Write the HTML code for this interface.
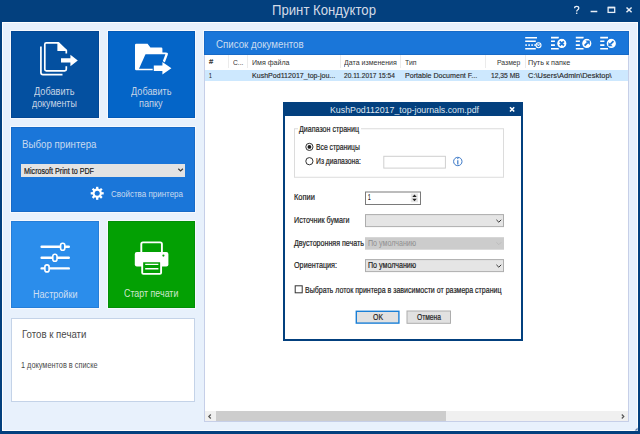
<!DOCTYPE html>
<html><head><meta charset="utf-8">
<style>
*{margin:0;padding:0;box-sizing:border-box}
html,body{width:640px;height:434px;overflow:hidden;background:#03407e}
body{position:relative;font-family:"Liberation Sans",sans-serif}
.a{position:absolute}
.t{position:absolute;white-space:nowrap;line-height:1;transform-origin:0 0}
svg{position:absolute;left:0;top:0;overflow:visible}
</style></head><body>
<!-- window frame -->
<div class="a" style="left:0;top:0;width:640px;height:22px;background:#03407e"></div>
<div class="a" style="left:2px;top:22px;width:636px;height:409px;background:#e8f1fc;border:1px solid #fff"></div>

<!-- tiles -->
<div class="a" style="left:11px;top:31px;width:88px;height:87px;background:#0450a0;box-shadow:0 0 0 1px rgba(255,255,255,.6),inset 0 0 0 1px rgba(0,0,50,.1)"></div>
<div class="a" style="left:108px;top:31px;width:87px;height:87px;background:#0465c8;box-shadow:0 0 0 1px rgba(255,255,255,.6),inset 0 0 0 1px rgba(0,0,50,.1)"></div>
<div class="a" style="left:11px;top:127px;width:184px;height:85px;background:#1a76d9;box-shadow:0 0 0 1px rgba(255,255,255,.6),inset 0 0 0 1px rgba(0,0,50,.1)"></div>
<div class="a" style="left:11px;top:221px;width:88px;height:87px;background:#2b8deb;box-shadow:0 0 0 1px rgba(255,255,255,.6),inset 0 0 0 1px rgba(0,0,50,.1)"></div>
<div class="a" style="left:108px;top:221px;width:87px;height:87px;background:#03a003;box-shadow:0 0 0 1px rgba(255,255,255,.6),inset 0 0 0 1px rgba(0,0,50,.1)"></div>
<div class="a" style="left:11px;top:318px;width:184px;height:84px;background:#fff;border:1px solid #c4d3e8"></div>
<!-- printer combo -->
<div class="a" style="left:21px;top:164px;width:164px;height:13px;background:#e3e3e3"></div>

<!-- right panel -->
<div class="a" style="left:204px;top:31px;width:425px;height:24px;background:#1a76d9;box-shadow:0 0 0 1px rgba(255,255,255,.6),inset 0 0 0 1px rgba(0,0,50,.1)"></div>
<div class="a" style="left:204px;top:55px;width:425px;height:367px;background:#fff;border:1px solid #c6cfe8;border-top:none"></div>
<div class="a" style="left:205px;top:70px;width:423px;height:11px;background:#cde8fe"></div>
<!-- header separators -->
<div class="a" style="left:228px;top:55px;width:1px;height:13px;background:#ebebeb"></div>
<div class="a" style="left:246.5px;top:55px;width:1px;height:13px;background:#ebebeb"></div>
<div class="a" style="left:340px;top:55px;width:1px;height:13px;background:#ebebeb"></div>
<div class="a" style="left:400px;top:55px;width:1px;height:13px;background:#ebebeb"></div>
<div class="a" style="left:485px;top:55px;width:1px;height:13px;background:#ebebeb"></div>
<div class="a" style="left:524.5px;top:55px;width:1px;height:13px;background:#ebebeb"></div>
<!-- scrollbar -->
<div class="a" style="left:205px;top:411px;width:423px;height:10px;background:#f0f0f0"></div>
<div class="a" style="left:216px;top:411px;width:230px;height:10px;background:#cdcdcd"></div>

<svg width="640" height="434" viewBox="0 0 640 434">
 <!-- window controls -->
 <g stroke="#e8eef6" fill="none">
  <path d="M574.6 8.2Q574.6 6.3 576.7 6.3Q578.8 6.3 578.8 8.1Q578.8 9.3 577.5 10Q576.7 10.5 576.7 11.6" stroke-width="1.3"/>
  <path d="M590.6 11.5H597.3" stroke-width="1.5"/>
  <rect x="608.1" y="7.4" width="6.6" height="5" stroke-width="1.3"/>
  <path d="M608.1 7.6H614.7" stroke-width="1.6"/>
  <path d="M626.5 7.5L631.6 12.2M631.6 7.5L626.5 12.2" stroke-width="1.5"/>
 </g>
 <circle cx="576.7" cy="13.3" r="0.8" fill="#e8eef6"/>

 <!-- documents icon -->
 <g fill="none" stroke="#fff" stroke-width="1.7">
  <path d="M66.3 53.5V50.3L58 42.8H46.3Q44.8 42.8 44.8 44.3V69.3Q44.8 70.8 46.3 70.8H64.8Q66.3 70.8 66.3 69.3V66.2"/>
  <path d="M40.9 46.5V72.5Q40.9 74.7 43 74.7H62.5"/>
 </g>
 <path d="M57.4 42.2H59L67 50.4V51H57.4Z" fill="#fff"/>
 <path d="M61 58.3H70.4V54.8L77.8 60.5L70.4 66.3V62.6H61Z" fill="#fff"/>

 <!-- folder icon -->
 <path d="M136.2 43.7H147.6L150.4 47.6H161.3Q162.4 47.6 162.4 48.7V52.6H165.9Q168.6 52.6 167.7 55L161.8 70.3H136.2Q135 70.3 135 69.1V44.9Q135 43.7 136.2 43.7Z" fill="#fff"/>
 <path d="M145.5 54.2H165.4L159.9 68.7H139Z" fill="#0465c8"/>
 <path d="M153.8 65.4H162.4V62L171.4 68.2L162.4 74.4V71H153.8Z" fill="#fff" stroke="#0465c8" stroke-width="2.2" paint-order="stroke"/>

 <!-- sliders icon -->
 <g stroke="#fff" stroke-width="2.4" stroke-linecap="round">
  <path d="M41.6 246.8H68.8M41.6 257.8H68.8M41.6 268.4H68.8"/>
 </g>
 <g stroke="#fff" stroke-width="1.6" fill="#2b8deb">
  <rect x="60.6" y="243.3" width="4.2" height="7" rx="2"/>
  <rect x="52.8" y="254.3" width="4.2" height="7" rx="2"/>
  <rect x="44.9" y="264.9" width="4.2" height="7" rx="2"/>
 </g>

 <!-- printer icon -->
 <rect x="141.3" y="242.4" width="20.6" height="12" rx="1.6" fill="none" stroke="#fff" stroke-width="1.9"/>
 <rect x="134.8" y="252.1" width="33.6" height="14.4" rx="2" fill="#fff"/>
 <circle cx="163.4" cy="255.6" r="1.1" fill="#03a003"/>
 <rect x="142.2" y="261.3" width="18.9" height="12.6" rx="1.2" fill="#03a003" stroke="#fff" stroke-width="1.9"/>
 <path d="M145.2 264.4H158.4M145.2 268.8H158.4" stroke="#fff" stroke-width="1.4"/>

 <!-- gear icon -->
 <g transform="translate(97.2 193.3)" fill="#fff">
  <circle r="4.7"/>
  <rect x="-1.15" y="-6.5" width="2.3" height="13"/>
  <rect x="-1.15" y="-6.5" width="2.3" height="13" transform="rotate(45)"/>
  <rect x="-1.15" y="-6.5" width="2.3" height="13" transform="rotate(90)"/>
  <rect x="-1.15" y="-6.5" width="2.3" height="13" transform="rotate(135)"/>
  <circle r="2.5" fill="#1a76d9"/>
 </g>

 <!-- printer combo chevron -->
 <path d="M178.3 168.8L180.6 171L182.9 168.8" stroke="#3a3a3a" stroke-width="1.2" fill="none"/>

 <!-- header icons -->
 <g stroke="#fff" stroke-width="1.6" fill="none">
  <path d="M525.2 37.8H537M525.2 41.3H535.8M525.2 48.7H535.8"/>
  <path d="M551 37.6H558.8M551 41.3H554.9M551 45.1H554.9M551 48.8H558.8"/>
  <path d="M575.8 37.6H583.6M575.8 41.3H579.9M575.8 45.1H579.9M575.8 48.8H583.6"/>
  <path d="M600.2 37.6H608M600.2 41.3H604.4M600.2 45.1H604.4M600.2 48.8H608"/>
 </g>
 <g fill="#fff"><rect x="525.3" y="44.3" width="1.6" height="1.6"/><rect x="528.3" y="44.3" width="1.6" height="1.6"/><rect x="531.3" y="44.3" width="1.6" height="1.6"/><rect x="534.3" y="44.3" width="1.6" height="1.6"/></g>
 <circle cx="538.5" cy="45.2" r="2.5" stroke="#fff" stroke-width="1.1" fill="#1a76d9"/>
 <path d="M537.3 44L539.7 46.4M539.7 44L537.3 46.4" stroke="#fff" stroke-width="0.9"/>
 <g fill="#fff" stroke="#1a76d9" stroke-width="1.2">
  <circle cx="561.8" cy="43.4" r="5.2"/>
  <circle cx="586.8" cy="43.4" r="5.2"/>
  <circle cx="611.3" cy="43.4" r="5.2"/>
 </g>
 <g stroke="#1a76d9" stroke-width="1.8" fill="none">
  <path d="M559.7 41.3L563.9 45.5M563.9 41.3L559.7 45.5"/>
  <path d="M584.6 45.7L587.6 42.7"/>
  <path d="M613.5 41.2L610.5 44.2"/>
 </g>
 <path d="M585.4 40.5H589.8V44.9Z" fill="#1a76d9"/>
 <path d="M608.3 41.9V46.3H612.7Z" fill="#1a76d9"/>

 <!-- scrollbar arrows -->
 <path d="M210.8 414.5L208.8 416.5L210.8 418.5" stroke="#555" stroke-width="1.2" fill="none"/>
 <path d="M621.8 414.5L623.8 416.5L621.8 418.5" stroke="#555" stroke-width="1.2" fill="none"/>
 <!-- grip -->
 <path d="M634.6 430.6L637.6 427.4V430.6Z" fill="#5f80ae"/>
</svg>

<div class="t" style="left:272.00px;top:2.00px;font-size:15px;color:#d3dbe7;transform:scaleX(0.877);">Принт Кондуктор</div>
<div class="t" style="left:34.30px;top:87.00px;font-size:10px;color:#c6d4e6;transform:scaleX(0.916);">Добавить</div>
<div class="t" style="left:32.20px;top:99.00px;font-size:10px;color:#c6d4e6;transform:scaleX(0.887);">документы</div>
<div class="t" style="left:130.90px;top:87.00px;font-size:10px;color:#c6d4e6;transform:scaleX(0.916);">Добавить</div>
<div class="t" style="left:138.90px;top:99.00px;font-size:10px;color:#c6d4e6;transform:scaleX(0.915);">папку</div>
<div class="t" style="left:32.50px;top:290.00px;font-size:10px;color:#cfdff2;transform:scaleX(0.907);">Настройки</div>
<div class="t" style="left:123.80px;top:289.00px;font-size:10px;color:#cde6cd;transform:scaleX(0.887);">Старт печати</div>
<div class="t" style="left:21.60px;top:140.00px;font-size:10px;color:#c8daef;transform:scaleX(0.970);">Выбор принтера</div>
<div class="t" style="left:24.20px;top:167.00px;font-size:8.5px;color:#1c1c1c;transform:scaleX(0.842);-webkit-text-stroke:0.2px #1c1c1c;">Microsoft Print to PDF</div>
<div class="t" style="left:111.20px;top:190.00px;font-size:9px;color:#c8daef;transform:scaleX(0.890);">Свойства принтера</div>
<div class="t" style="left:21.60px;top:330.00px;font-size:10px;color:#4a4a4a;transform:scaleX(0.965);">Готов к печати</div>
<div class="t" style="left:21.20px;top:361.00px;font-size:9px;color:#4a4a4a;transform:scaleX(0.815);">1 документов в списке</div>
<div class="t" style="left:215.70px;top:40.00px;font-size:10px;color:#cadcf0;transform:scaleX(0.973);">Список документов</div>
<div class="t" style="left:208.50px;top:58.00px;font-size:7px;color:#2a2a2a;transform:scaleX(1.075);-webkit-text-stroke:0.15px #2a2a2a;">#</div>
<div class="t" style="left:233.00px;top:59.00px;font-size:8px;color:#333;transform:scaleX(0.835);">С...</div>
<div class="t" style="left:251.60px;top:59.00px;font-size:8px;color:#333;transform:scaleX(0.884);">Имя файла</div>
<div class="t" style="left:344.00px;top:59.00px;font-size:8px;color:#333;transform:scaleX(0.878);">Дата изменения</div>
<div class="t" style="left:405.30px;top:59.00px;font-size:8px;color:#333;transform:scaleX(0.869);">Тип</div>
<div class="t" style="left:496.90px;top:59.00px;font-size:8px;color:#333;transform:scaleX(0.851);">Размер</div>
<div class="t" style="left:528.00px;top:59.00px;font-size:8px;color:#333;transform:scaleX(0.904);">Путь к папке</div>
<div class="t" style="left:208.70px;top:72.00px;font-size:8px;color:#2a2a2a;transform:scaleX(0.629);-webkit-text-stroke:0.15px #2a2a2a;">1</div>
<div class="t" style="left:251.60px;top:72.00px;font-size:8px;color:#2a2a2a;transform:scaleX(0.884);-webkit-text-stroke:0.15px #2a2a2a;">KushPod112017_top-jou...</div>
<div class="t" style="left:344.00px;top:72.00px;font-size:8px;color:#2a2a2a;transform:scaleX(0.825);-webkit-text-stroke:0.15px #2a2a2a;">20.11.2017 15:54</div>
<div class="t" style="left:405.30px;top:72.00px;font-size:8px;color:#2a2a2a;transform:scaleX(0.888);-webkit-text-stroke:0.15px #2a2a2a;">Portable Document F...</div>
<div class="t" style="left:490.50px;top:72.00px;font-size:8px;color:#2a2a2a;transform:scaleX(0.841);-webkit-text-stroke:0.15px #2a2a2a;">12,35 MB</div>
<div class="t" style="left:528.00px;top:72.00px;font-size:8px;color:#2a2a2a;transform:scaleX(0.931);-webkit-text-stroke:0.15px #2a2a2a;">C:\Users\Admin\Desktop\</div>

<!-- dialog -->
<div class="a" style="left:283px;top:102px;width:240px;height:239px;background:#fff;border:2px solid #03407e;border-top:none"></div>
<div class="a" style="left:283px;top:102px;width:240px;height:14px;background:#03407e"></div>
<svg width="640" height="434" viewBox="0 0 640 434">
 <path d="M510 107.3L514.2 111.5M514.2 107.3L510 111.5" stroke="#fff" stroke-width="1.6"/>
 <!-- group box -->
 <rect x="294.5" y="128.75" width="209" height="48.5" fill="none" stroke="#dcdcdc" stroke-width="1"/>
 <rect x="298" y="126" width="63" height="5" fill="#fff"/>
 <!-- radios -->
 <circle cx="309.4" cy="146.9" r="3.6" fill="#fff" stroke="#333" stroke-width="1"/>
 <circle cx="309.4" cy="146.9" r="1.9" fill="#1a1a1a"/>
 <circle cx="309.4" cy="161.2" r="3.6" fill="#fff" stroke="#333" stroke-width="1"/>
 <!-- range input -->
 <rect x="383.8" y="156.3" width="61.6" height="11.8" fill="#fff" stroke="#cfcfcf" stroke-width="1"/>
 <!-- info icon -->
 <circle cx="457.8" cy="161.5" r="4.2" fill="none" stroke="#3b78c7" stroke-width="1"/>
 <path d="M457.8 160.3V164.4" stroke="#3b78c7" stroke-width="1.2"/>
 <circle cx="457.8" cy="158.6" r="0.7" fill="#3b78c7"/>
 <!-- spin box -->
 <rect x="365.5" y="192" width="55" height="12.5" fill="#fff" stroke="#7a7a7a" stroke-width="1"/>
 <rect x="410.8" y="193.5" width="7.2" height="4.3" fill="#e6e6e6"/>
 <rect x="410.8" y="198" width="7.2" height="4.3" fill="#e6e6e6"/>
 <path d="M412.3 197H416.7L414.5 194.6Z" fill="#222"/>
 <path d="M412.3 198.8H416.7L414.5 201.2Z" fill="#222"/>
 <!-- combos -->
 <rect x="365.5" y="214.6" width="138" height="12" fill="#e5e5e5" stroke="#adadad" stroke-width="1"/>
 <path d="M496.4 219.8L498.8 222.2L501.2 219.8" stroke="#333" stroke-width="1" fill="none"/>
 <rect x="365" y="237.2" width="139" height="12.5" fill="#cccccc"/>
 <path d="M496.4 242.3L498.8 244.7L501.2 242.3" stroke="#bdbdbd" stroke-width="1" fill="none"/>
 <rect x="365.5" y="259.6" width="138" height="12" fill="#e5e5e5" stroke="#adadad" stroke-width="1"/>
 <path d="M496.4 264.8L498.8 267.2L501.2 264.8" stroke="#333" stroke-width="1" fill="none"/>
 <!-- checkbox -->
 <rect x="295.2" y="285.8" width="7" height="7" fill="#fff" stroke="#333" stroke-width="1"/>
 <!-- buttons -->
 <rect x="356.3" y="311.3" width="42.6" height="11.8" fill="#e1e1e1" stroke="#1a7fd6" stroke-width="1.4"/>
 <rect x="407" y="311" width="43.5" height="12.3" fill="#e1e1e1" stroke="#adadad" stroke-width="1"/>
</svg>
<div class="t" style="left:330.30px;top:105.00px;font-size:9.5px;color:#dfe6ef;transform:scaleX(0.926);">KushPod112017_top-journals.com.pdf</div>
<div class="t" style="left:299.40px;top:125.00px;font-size:8.5px;color:#1e1e1e;transform:scaleX(0.834);-webkit-text-stroke:0.2px #1e1e1e;">Диапазон страниц</div>
<div class="t" style="left:315.60px;top:143.00px;font-size:8.5px;color:#1e1e1e;transform:scaleX(0.796);-webkit-text-stroke:0.2px #1e1e1e;">Все страницы</div>
<div class="t" style="left:315.60px;top:157.00px;font-size:8.5px;color:#1e1e1e;transform:scaleX(0.798);-webkit-text-stroke:0.2px #1e1e1e;">Из диапазона:</div>
<div class="t" style="left:294.30px;top:193.00px;font-size:8.5px;color:#1e1e1e;transform:scaleX(0.875);-webkit-text-stroke:0.2px #1e1e1e;">Копии</div>
<div class="t" style="left:294.30px;top:216.00px;font-size:8.5px;color:#1e1e1e;transform:scaleX(0.842);-webkit-text-stroke:0.2px #1e1e1e;">Источник бумаги</div>
<div class="t" style="left:294.30px;top:239.00px;font-size:8.5px;color:#1e1e1e;transform:scaleX(0.836);-webkit-text-stroke:0.2px #1e1e1e;">Двусторонняя печать</div>
<div class="t" style="left:367.50px;top:239.00px;font-size:8.5px;color:#8f8f8f;transform:scaleX(0.838);">По умолчанию</div>
<div class="t" style="left:294.30px;top:261.00px;font-size:8.5px;color:#1e1e1e;transform:scaleX(0.849);-webkit-text-stroke:0.2px #1e1e1e;">Ориентация:</div>
<div class="t" style="left:367.50px;top:261.00px;font-size:8.5px;color:#1e1e1e;transform:scaleX(0.838);-webkit-text-stroke:0.2px #1e1e1e;">По умолчанию</div>
<div class="t" style="left:367.60px;top:193.00px;font-size:8.5px;color:#1e1e1e;transform:scaleX(0.549);-webkit-text-stroke:0.2px #1e1e1e;">1</div>
<div class="t" style="left:305.00px;top:286.00px;font-size:8.5px;color:#1e1e1e;transform:scaleX(0.826);-webkit-text-stroke:0.2px #1e1e1e;">Выбрать лоток принтера в зависимости от размера страниц</div>
<div class="t" style="left:372.50px;top:313.00px;font-size:8.5px;color:#1e1e1e;transform:scaleX(0.814);-webkit-text-stroke:0.2px #1e1e1e;">OK</div>
<div class="t" style="left:417.20px;top:313.00px;font-size:8.5px;color:#1e1e1e;transform:scaleX(0.787);-webkit-text-stroke:0.2px #1e1e1e;">Отмена</div>
</body></html>
